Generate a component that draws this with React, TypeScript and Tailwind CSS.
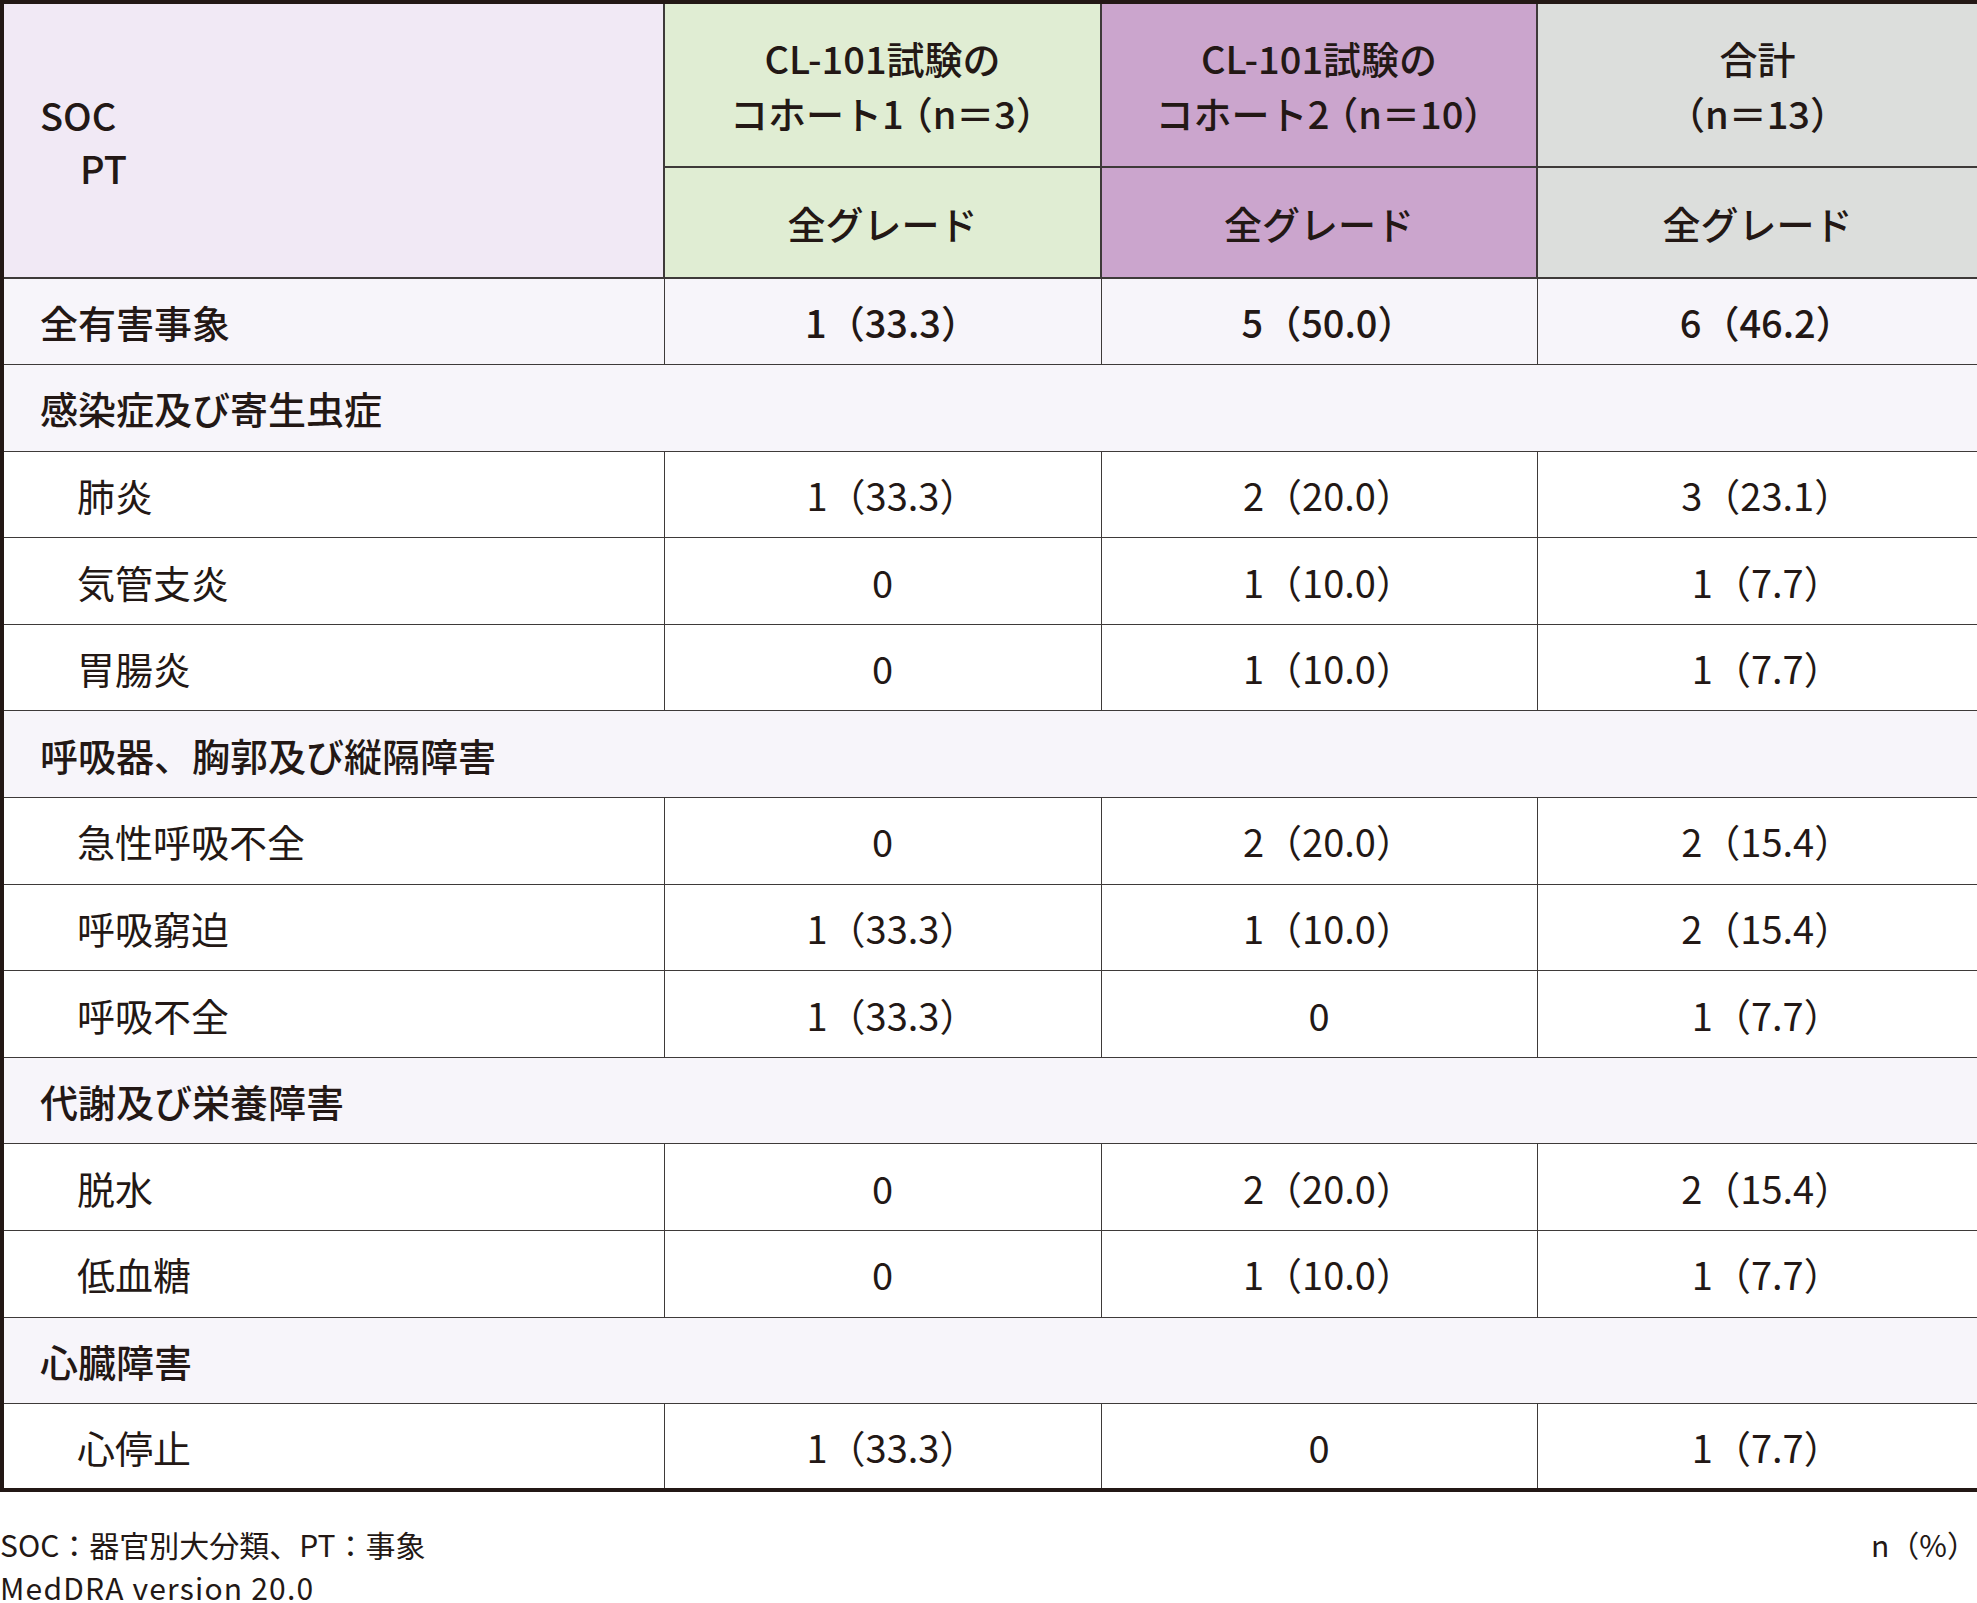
const font = "font-['Noto_Sans_CJK_JP','Noto_Sans',sans-serif]";

type Row = { label: string; soc?: boolean; v?: [string, string, string] };

const ROWS: Row[] = [
  { label: "全有害事象", soc: true, v: ["1（33.3）", "5（50.0）", "6（46.2）"] },
  { label: "感染症及び寄生虫症", soc: true },
  { label: "肺炎", v: ["1（33.3）", "2（20.0）", "3（23.1）"] },
  { label: "気管支炎", v: ["0", "1（10.0）", "1（7.7）"] },
  { label: "胃腸炎", v: ["0", "1（10.0）", "1（7.7）"] },
  { label: "呼吸器、胸郭及び縦隔障害", soc: true },
  { label: "急性呼吸不全", v: ["0", "2（20.0）", "2（15.4）"] },
  { label: "呼吸窮迫", v: ["1（33.3）", "1（10.0）", "2（15.4）"] },
  { label: "呼吸不全", v: ["1（33.3）", "0", "1（7.7）"] },
  { label: "代謝及び栄養障害", soc: true },
  { label: "脱水", v: ["0", "2（20.0）", "2（15.4）"] },
  { label: "低血糖", v: ["0", "1（10.0）", "1（7.7）"] },
  { label: "心臓障害", soc: true },
  { label: "心停止", v: ["1（33.3）", "0", "1（7.7）"] },
];

const HEAD_BG = ["bg-[#e0edd3]", "bg-[#cba5cd]", "bg-[#dcdedc]"];

// closing full-width paren: drop its trailing blank so the ink sits centred
function Val({ s }: { s: string }) {
  if (!s.endsWith("）")) return <>{s}</>;
  return <span className="-mr-[0.5em]">{s}</span>;
}

// header "(n=…)" – bracket space squeezed like the print layout
function Count({ pre, n }: { pre: string; n: string }) {
  const head = pre.slice(0, -1);
  const last = pre.slice(-1);
  return (
    <div className="whitespace-nowrap">
      {head}
      {last && <span className="tracking-[-9px]">{last}</span>}
      <span className={pre ? "" : "-ml-[0.5em]"}>（</span>n＝{n}
      <span className="-mr-[0.5em]">）</span>
    </div>
  );
}

export default function App() {
  return (
    <div className={`${font} w-[1977px] bg-white text-[#231815]`}>
      <table className="w-[1977px] table-fixed border-collapse border-4 border-[#231815] text-[38px]">
        <colgroup>
          <col className="w-[662px]" />
          <col className="w-[437px]" />
          <col className="w-[436px]" />
          <col className="w-[442px]" />
        </colgroup>
        <thead>
          <tr className="h-[165px]">
            <th
              rowSpan={2}
              className="border-2 border-[#3e3a39] bg-[#f1e9f5] pl-[36px] text-left align-middle font-medium leading-[53px]"
            >
              <div>SOC</div>
              <div className="pl-[40px]">PT</div>
            </th>
            <th className={`border-2 border-[#3e3a39] ${HEAD_BG[0]} text-center font-medium leading-[55px]`}>
              <div>CL-101試験の</div>
              <Count pre="コホート1" n="3" />
            </th>
            <th className={`border-2 border-[#3e3a39] ${HEAD_BG[1]} text-center font-medium leading-[55px]`}>
              <div>CL-101試験の</div>
              <Count pre="コホート2" n="10" />
            </th>
            <th className={`border-2 border-[#3e3a39] ${HEAD_BG[2]} text-center font-medium leading-[55px]`}>
              <div>合計</div>
              <Count pre="" n="13" />
            </th>
          </tr>
          <tr className="h-[111px]">
            {HEAD_BG.map((bg) => (
              <th key={bg} className={`border-2 border-[#3e3a39] ${bg} text-center font-medium`}>
                全グレード
              </th>
            ))}
          </tr>
        </thead>
        <tbody>
          {ROWS.map((r) => (
            <tr key={r.label} className={`h-[86.6px] ${r.soc ? "bg-[#f7f5fa]" : "bg-white"}`}>
              {r.v ? (
                <>
                  <td
                    className={`border border-[#3e3a39] ${
                      r.soc ? "pl-[36px] font-medium" : "pl-[73px]"
                    }`}
                  >
                    {r.label}
                  </td>
                  {r.v.map((x, i) => (
                    <td
                      key={i}
                      className={`border border-[#3e3a39] text-center ${r.soc ? "font-medium" : ""}`}
                    >
                      <Val s={x} />
                    </td>
                  ))}
                </>
              ) : (
                <td colSpan={4} className="border border-[#3e3a39] pl-[36px] font-medium">
                  {r.label}
                </td>
              )}
            </tr>
          ))}
        </tbody>
      </table>

      <div className="mt-[31px] flex justify-between text-[30px] leading-[43px]">
        <div>
          <div className="whitespace-nowrap">SOC：器官別大分類、PT：事象</div>
          <div className="whitespace-nowrap tracking-[1.2px]">MedDRA version 20.0</div>
        </div>
        <div className="whitespace-nowrap">n（%）</div>
      </div>
    </div>
  );
}
